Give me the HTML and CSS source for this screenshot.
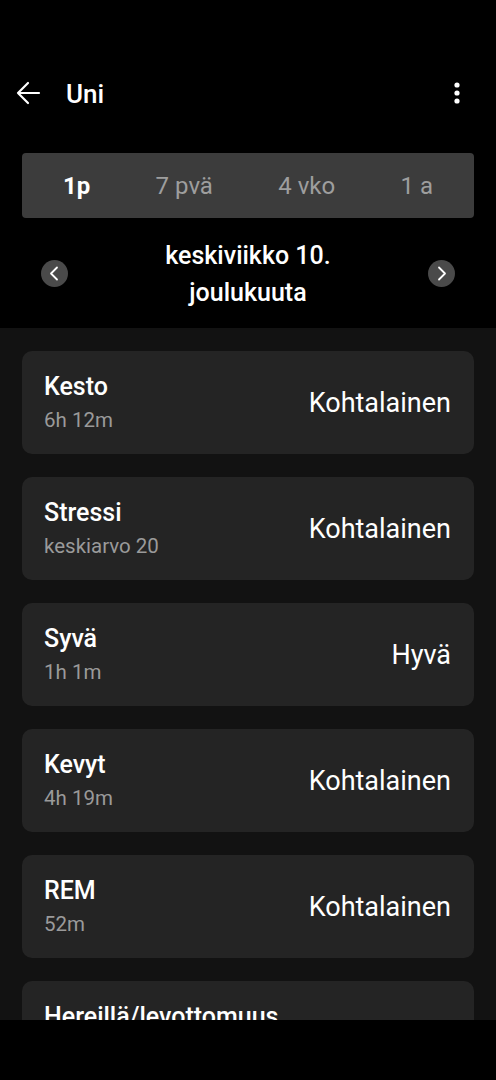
FILE: index.html
```html
<!DOCTYPE html>
<html>
<head>
<meta charset="utf-8"/>
<title>Uni</title>
<link rel="stylesheet" href="styles.css">
</head>
<body>
<div class="screen">
  <div class="top">
    <div class="appbar">
      <svg class="back" width="26" height="24" viewBox="0 0 26 24">
        <path d="M3 12H24M13 2L3 12L13 22" fill="none" stroke="#fff" stroke-width="2.2" stroke-linecap="round" stroke-linejoin="round"/>
      </svg>
      <div class="title">Uni</div>
      <svg class="more" width="8" height="24" viewBox="0 0 8 24">
        <circle cx="4" cy="4" r="2.6" fill="#fff"/>
        <circle cx="4" cy="12" r="2.6" fill="#fff"/>
        <circle cx="4" cy="20" r="2.6" fill="#fff"/>
      </svg>
    </div>

    <div class="tabs">
      <span class="tab active">1p</span>
      <span class="tab">7 pvä</span>
      <span class="tab">4 vko</span>
      <span class="tab">1 a</span>
    </div>

    <div class="daterow">
      <div class="nav-btn">
        <svg width="27" height="27" viewBox="0 0 27 27">
          <path d="M16 7.5L10 13.5L16 19.5" fill="none" stroke="#fff" stroke-width="1.8" stroke-linecap="round" stroke-linejoin="round"/>
        </svg>
      </div>
      <div class="date">keskiviikko 10. joulukuuta</div>
      <div class="nav-btn">
        <svg width="27" height="27" viewBox="0 0 27 27">
          <path d="M11 7.5L17 13.5L11 19.5" fill="none" stroke="#fff" stroke-width="1.8" stroke-linecap="round" stroke-linejoin="round"/>
        </svg>
      </div>
    </div>
  </div>

  <div class="list">
    <div class="card">
      <div class="info">
        <div class="name">Kesto</div>
        <div class="sub">6h 12m</div>
      </div>
      <div class="value">Kohtalainen</div>
    </div>
    <div class="card">
      <div class="info">
        <div class="name">Stressi</div>
        <div class="sub">keskiarvo 20</div>
      </div>
      <div class="value">Kohtalainen</div>
    </div>
    <div class="card">
      <div class="info">
        <div class="name">Syvä</div>
        <div class="sub">1h 1m</div>
      </div>
      <div class="value">Hyvä</div>
    </div>
    <div class="card">
      <div class="info">
        <div class="name">Kevyt</div>
        <div class="sub">4h 19m</div>
      </div>
      <div class="value">Kohtalainen</div>
    </div>
    <div class="card">
      <div class="info">
        <div class="name">REM</div>
        <div class="sub">52m</div>
      </div>
      <div class="value">Kohtalainen</div>
    </div>
    <div class="card">
      <div class="info">
        <div class="name">Hereillä/levottomuus</div>
        <div class="sub"></div>
      </div>
    </div>
  </div>

  <div class="navbar"></div>
</div>
</body>
</html>
```

FILE: styles.css
```css
html, body {
   margin: 0;
   padding: 0;
   background-color: #000;
}

body {
   font-family: Roboto, "Noto Sans", "Liberation Sans", sans-serif;
   color: #fff;
}

.screen {
   width: 496px;
   height: 1080px;
   display: flex;
   flex-direction: column;
   overflow: hidden;
}

.top {
   background-color: #000;
   padding-top: 60px;
   height: 268px;
   flex-shrink: 0;
}

.appbar {
   height: 66px;
   display: flex;
   align-items: center;
   padding: 0 35px 0 15px;
}

.back {
   display: block;
}

.title {
   flex: 1;
   margin-left: 25px;
   font-size: 26px;
   font-weight: 500;
   line-height: 30px;
   padding-top: 2px;
}

.more {
   display: block;
}

.tabs {
   margin: 27px 22px 0;
   height: 65px;
   background-color: #3c3c3c;
   border-radius: 4px;
   display: flex;
   align-items: center;
   justify-content: space-between;
   padding: 0 41px;
   font-size: 24px;
   color: #9e9e9e;
}

.tab.active {
   color: #fff;
   font-weight: 700;
}

.daterow {
   height: 110px;
   display: flex;
   align-items: center;
   padding: 0 41px;
}

.nav-btn {
   width: 27px;
   height: 27px;
   border-radius: 50%;
   background-color: #4a4a4a;
   flex-shrink: 0;
}

.nav-btn svg {
   display: block;
}

.date {
   flex: 1;
   max-width: 210px;
   margin: 0 auto;
   padding-top: 2px;
   text-align: center;
   font-size: 25px;
   font-weight: 500;
   line-height: 37px;
}

.list {
   flex: 1;
   background-color: #121212;
   padding: 23px 22px 0;
   display: flex;
   flex-direction: column;
   gap: 23px;
   overflow: hidden;
}

.card {
   flex-shrink: 0;
   height: 103px;
   border-radius: 10px;
   background-color: #242424;
   display: flex;
   align-items: center;
   justify-content: space-between;
   padding: 0 23px 0 22px;
}

.info {
   padding-top: 3px;
}

.name {
   font-size: 25px;
   font-weight: 500;
   line-height: 32px;
}

.sub {
   font-size: 20.5px;
   line-height: 34px;
   height: 34px;
   color: #9a9a9a;
}

.value {
   font-size: 27px;
   line-height: 32px;
}

.navbar {
   height: 60px;
   flex-shrink: 0;
   background-color: #000;
}
```
